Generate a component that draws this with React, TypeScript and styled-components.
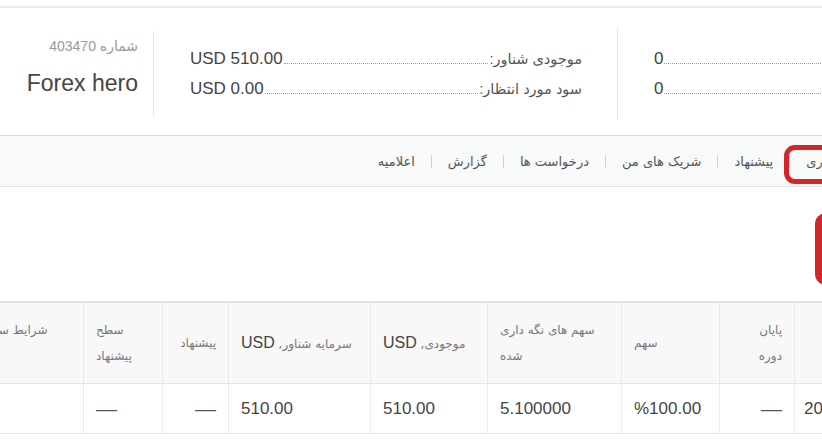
import * as React from "react";
import styled, { createGlobalStyle } from "styled-components";

const GlobalStyle = createGlobalStyle`
  html, body {
    margin: 0;
    padding: 0;
    background: #ffffff;
    overflow: hidden;
  }
  body {
    font-family: "Liberation Sans", "DejaVu Sans", sans-serif;
    color: #444444;
  }
`;

const Page = styled.div`
  position: relative;
  width: 822px;
  height: 445px;
  padding-top: 6px;
  box-sizing: border-box;
  overflow: hidden;
`;

const Header = styled.div`
  height: 129px;
  box-sizing: border-box;
  border-top: 2px solid #ececec;
  padding-top: 4px;
  display: flex;
  align-items: center;
  overflow: hidden;
`;

const Account = styled.div`
  width: 138px;
  flex-shrink: 0;
  direction: rtl;
  text-align: right;
  margin-top: -13px;
`;

const AccountNumber = styled.div`
  font-size: 14px;
  line-height: 20px;
  color: #9a9a9a;
`;

const AccountName = styled.div`
  margin-top: 12px;
  font-size: 23px;
  line-height: 30px;
  color: #454545;
  direction: ltr;
`;

const Divider = styled.div<{ $h: number; $left: number; $right: number }>`
  flex-shrink: 0;
  width: 1px;
  height: ${(p) => p.$h}px;
  background: #e6e6e6;
  margin: 0 ${(p) => p.$right}px 0 ${(p) => p.$left}px;
`;

const Summary = styled.div`
  width: 392px;
  flex-shrink: 0;
  display: flex;
  flex-direction: column;
  gap: 10px;
`;

const SummaryRow = styled.div`
  direction: rtl;
  display: flex;
  align-items: baseline;
  line-height: 20px;
`;

const Label = styled.span`
  font-size: 14.5px;
  color: #555555;
  white-space: nowrap;
`;

const Leader = styled.span`
  flex: 1;
  height: 0;
  border-bottom: 1px dotted #9a9a9a;
  margin: 0 1px;
`;

const Value = styled.span`
  direction: ltr;
  font-size: 17px;
  color: #444444;
  white-space: nowrap;
`;

const TabBar = styled.div`
  height: 52px;
  box-sizing: border-box;
  border-top: 1px solid #dcdcdc;
  border-bottom: 1px solid #e2e2e2;
  background: #f8f9f9;
  display: flex;
  justify-content: flex-end;
  overflow: hidden;
`;

const TabList = styled.div`
  direction: rtl;
  display: flex;
  align-items: center;
  flex-shrink: 0;
  margin-right: -77px;
`;

const Tab = styled.span`
  font-size: 13px;
  color: #555555;
  padding: 0 16px;
  white-space: nowrap;
  font-family: "DejaVu Sans", sans-serif;
`;

const TabSep = styled.span`
  width: 1px;
  height: 13px;
  background: #d2d2d2;
`;

const Spacer = styled.div`
  height: 114px;
`;

const TableWrap = styled.div`
  overflow: hidden;
  width: 822px;
`;

const Table = styled.table`
  direction: rtl;
  border-collapse: collapse;
  table-layout: fixed;
  width: 998px;
  margin-left: -94px;
  border-top: 2px solid #dde6d6;
`;

const Th = styled.th<{ $align?: "left" | "right" }>`
  height: 80px;
  background: #f8f8f8;
  border-left: 1px solid #e9e9e9;
  border-bottom: 1px solid #e4e4e4;
  padding: 0 12px;
  text-align: ${(p) => p.$align || "left"};
  vertical-align: middle;
  font-weight: 400;
  font-size: 12px;
  line-height: 26px;
  color: #777777;
  font-family: "DejaVu Sans", sans-serif;
  overflow: hidden;
`;

const Cur = styled.span`
  font-family: "Liberation Sans", sans-serif;
  font-weight: 400;
  font-size: 16px;
  color: #444444;
`;

const Td = styled.td<{ $align?: "left" | "right"; $pad?: number }>`
  height: 49px;
  border-left: 1px solid #ececec;
  border-bottom: 1px solid #e4e4e4;
  padding: 0 12px 0 ${(p) => p.$pad ?? 12}px;
  text-align: ${(p) => p.$align || "left"};
  font-size: 17px;
  color: #454545;
  white-space: nowrap;
  overflow: hidden;
`;

const Num = styled.span`
  direction: ltr;
  unicode-bidi: isolate;
`;

const Dash = styled.span`
  font-size: 21px;
  color: #555555;
`;

const Mark = styled.div<{ $x: number; $y: number; $w: number; $h: number; $b: number }>`
  position: absolute;
  left: ${(p) => p.$x}px;
  top: ${(p) => p.$y}px;
  width: ${(p) => p.$w}px;
  height: ${(p) => p.$h}px;
  border: ${(p) => p.$b}px solid #d3262a;
  border-radius: 11px;
  box-sizing: border-box;
`;

type Column = {
  w: number;
  title: React.ReactNode;
  hAlign?: "left" | "right";
  align?: "left" | "right";
  pad?: number;
  value: string;
};

const columns: Column[] = [
  { w: 110, title: "تاریخ شروع", hAlign: "right", pad: 9, value: "2016.05.12" },
  { w: 75, title: <>پایان<br />دوره</>, hAlign: "right", align: "right", value: "—" },
  { w: 98, title: "سهم", value: "%100.00" },
  { w: 134, title: "سهم های نگه داری شده", value: "5.100000" },
  { w: 117, title: <>موجودی, <Cur>USD</Cur></>, value: "510.00" },
  { w: 142, title: <>سرمایه شناور, <Cur>USD</Cur></>, value: "510.00" },
  { w: 66, title: "پیشنهاد", hAlign: "right", align: "right", value: "—" },
  { w: 79, title: <>سطح<br />پیشنهاد</>, value: "—" },
  { w: 177, title: <>شرایط سوآپ و کمیسیون<br />ها</>, value: "" },
];

export default function App() {
  return (
    <Page>
      <GlobalStyle />
      <Header>
        <Account>
          <AccountNumber>شماره 403470</AccountNumber>
          <AccountName>Forex hero</AccountName>
        </Account>
        <Divider $h={86} $left={15} $right={36} />
        <Summary>
          <SummaryRow>
            <Label>موجودی شناور:</Label>
            <Leader />
            <Value>USD 510.00</Value>
          </SummaryRow>
          <SummaryRow>
            <Label>سود مورد انتظار:</Label>
            <Leader />
            <Value>USD 0.00</Value>
          </SummaryRow>
        </Summary>
        <Divider $h={93} $left={35} $right={36} />
        <Summary>
          <SummaryRow>
            <Label>تعداد سرمایه گذاران:</Label>
            <Leader />
            <Value>0</Value>
          </SummaryRow>
          <SummaryRow>
            <Label>تعداد درخواست ها:</Label>
            <Leader />
            <Value>0</Value>
          </SummaryRow>
        </Summary>
      </Header>
      <TabBar>
        <TabList>
          <Tab>سرمایه گذاری</Tab>
          <TabSep />
          <Tab>پیشنهاد</Tab>
          <TabSep />
          <Tab>شریک های من</Tab>
          <TabSep />
          <Tab>درخواست ها</Tab>
          <TabSep />
          <Tab>گزارش</Tab>
          <TabSep />
          <Tab>اعلامیه</Tab>
        </TabList>
      </TabBar>
      <Spacer />
      <TableWrap>
        <Table>
          <colgroup>
            {columns.map((c, i) => (
              <col key={i} style={{ width: c.w }} />
            ))}
          </colgroup>
          <thead>
            <tr>
              {columns.map((c, i) => (
                <Th key={i} $align={c.hAlign}>{c.title}</Th>
              ))}
            </tr>
          </thead>
          <tbody>
            <tr>
              {columns.map((c, i) => (
                <Td key={i} $align={c.align} $pad={c.pad}>
                  {c.value === "—" ? <Dash>—</Dash> : <Num>{c.value}</Num>}
                </Td>
              ))}
            </tr>
          </tbody>
        </Table>
      </TableWrap>
      <Mark $x={784} $y={145} $w={70} $h={39} $b={5} />
      <Mark $x={815} $y={213} $w={40} $h={72} $b={7} />
    </Page>
  );
}
